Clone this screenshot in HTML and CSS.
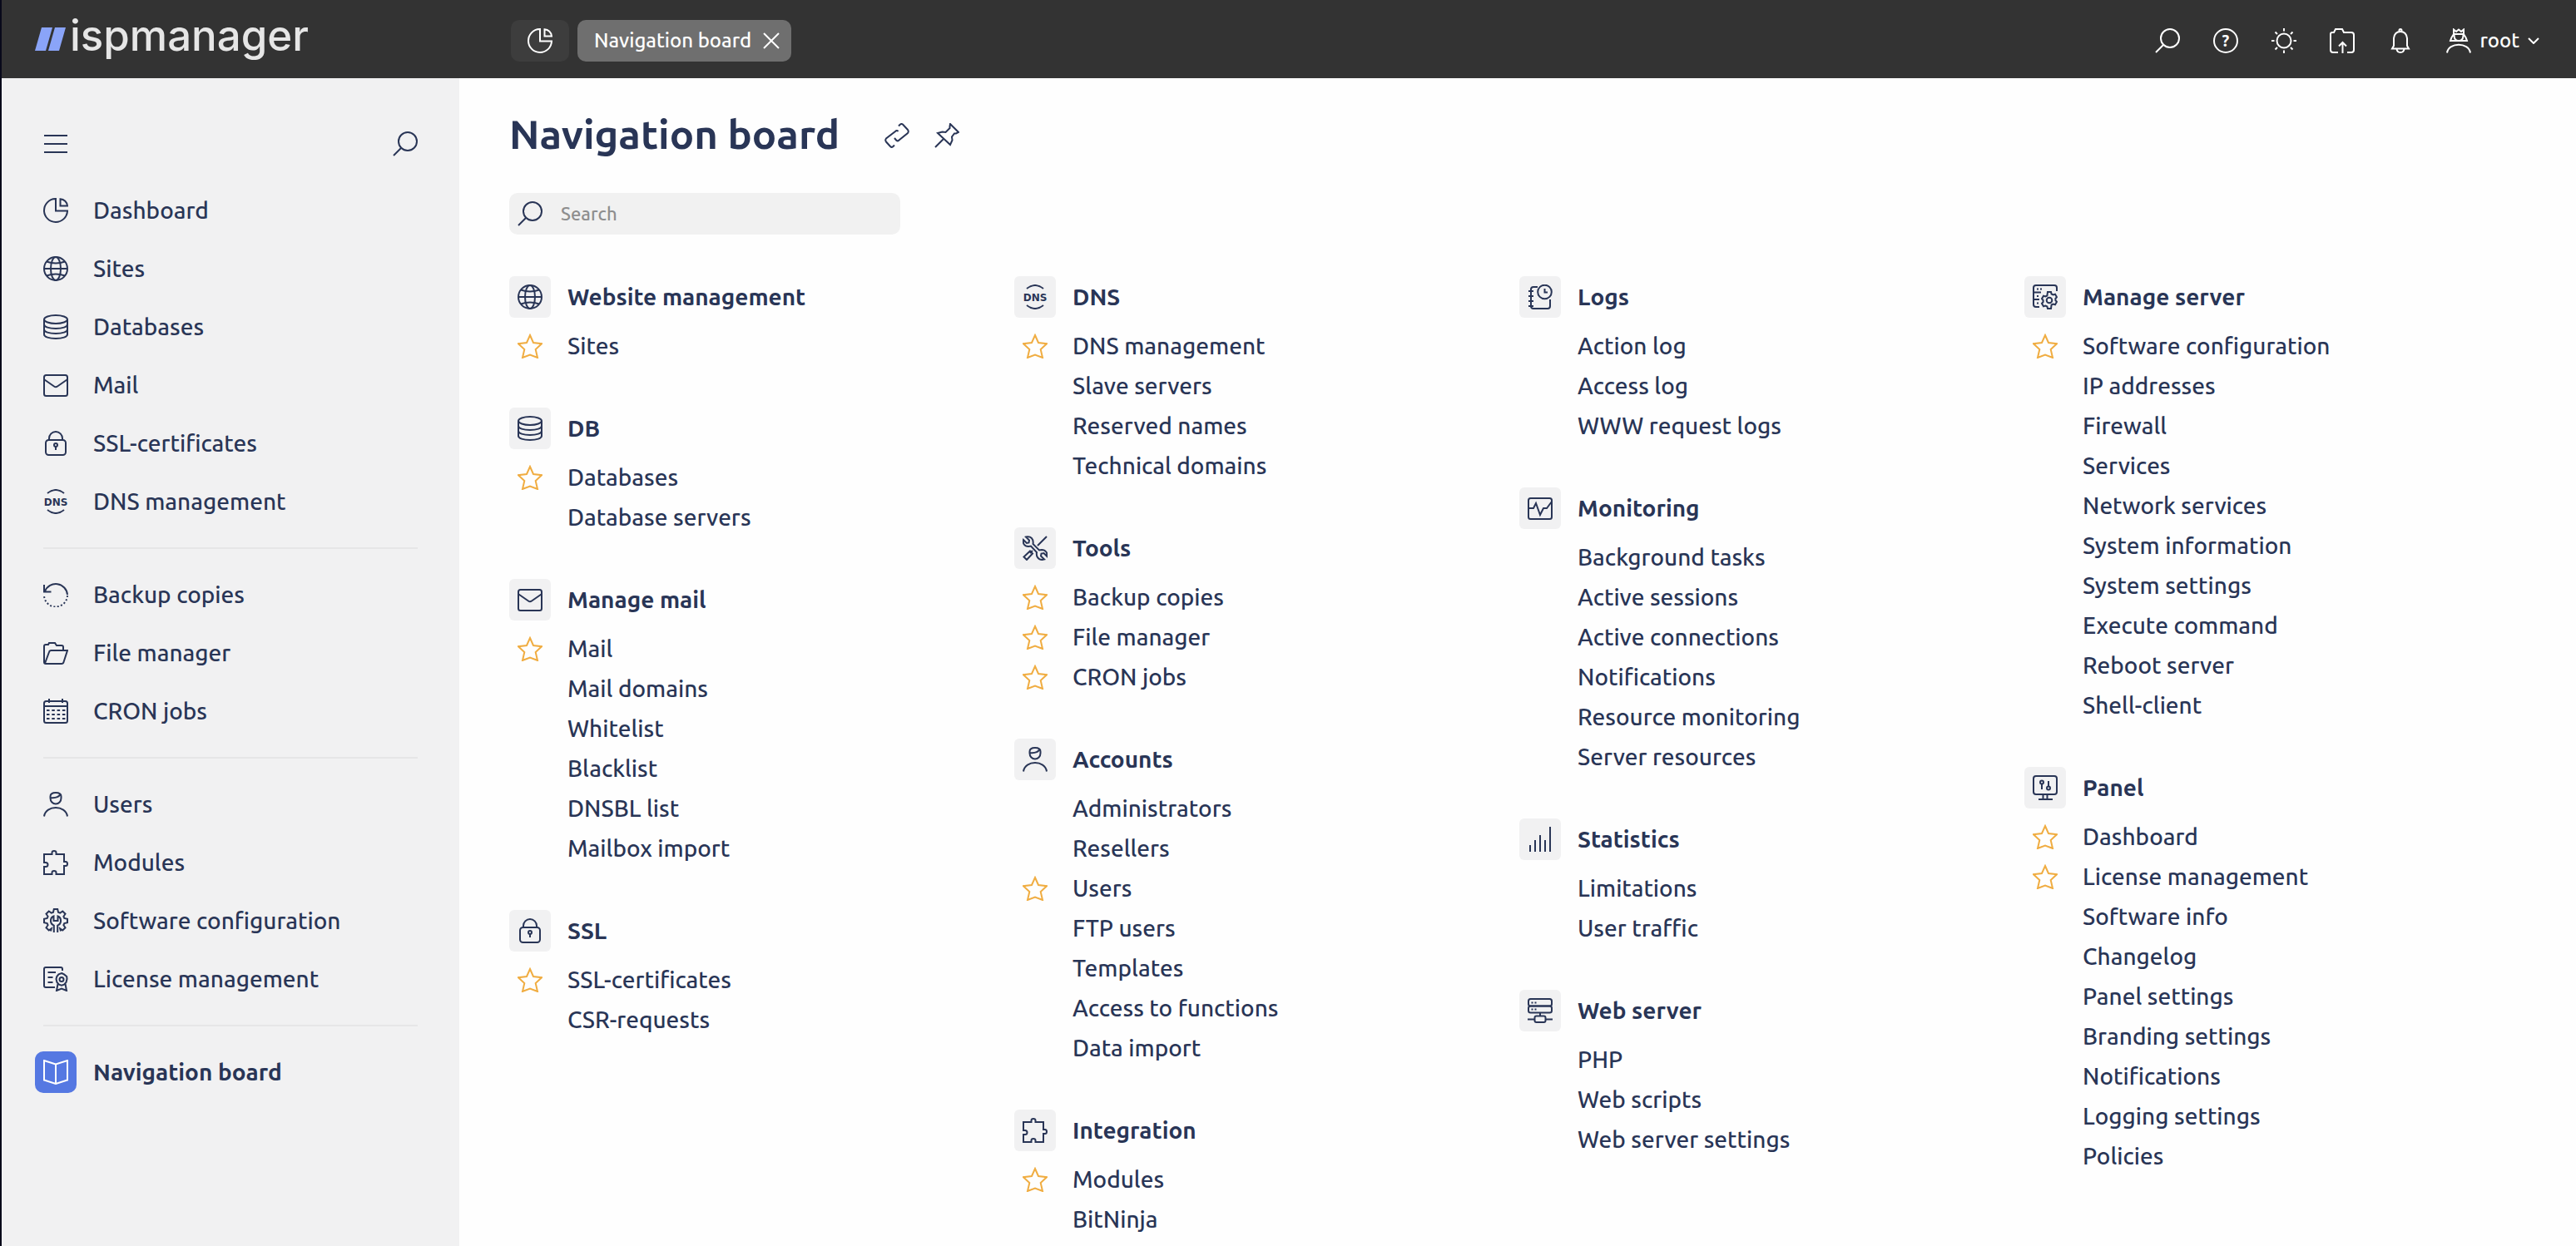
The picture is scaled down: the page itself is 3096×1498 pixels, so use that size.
FILE: index.html
```html
<!DOCTYPE html>
<html lang="en">
<head>
  <meta charset="UTF-8" />
  <meta name="viewport" content="width=device-width, initial-scale=1.0" />
  <title>Navigation board – ispmanager</title>
  <link rel="stylesheet" href="styles.css">
</head>
<body>

  <!-- Icon set, 30x30 grid -->
  <svg class="sprite" aria-hidden="true">
    <symbol id="i-search" viewBox="0 0 30 30"><circle cx="18" cy="12" r="11"/><path d="M10 20l-9 9"/></symbol>
    <symbol id="i-menu" viewBox="0 0 30 30"><path d="M1 5h28M1 15h28M1 25h28"/></symbol>
    <symbol id="i-pie" viewBox="0 0 30 30"><path d="M14.500 1A14 14 0 1 0 29 15.500H15V1z"/><path d="M20.500 1.200A9 9 0 0 1 29 9.500H20.500z"/></symbol>
    <symbol id="i-globe" viewBox="0 0 30 30"><circle cx="15" cy="15" r="14"/><ellipse cx="15" cy="15" rx="6" ry="14"/><path d="M1 15h28M4 6.500q11 4 22 0M4 23.500q11-4 22 0"/></symbol>
    <symbol id="i-db" viewBox="0 0 30 30"><ellipse cx="15" cy="6" rx="14" ry="5"/><path d="M1 6v18c0 3 6 5 14 5s14-2 14-5V6M1 12c0 3 6 5 14 5s14-2 14-5M1 18c0 3 6 5 14 5s14-2 14-5"/></symbol>
    <symbol id="i-mail" viewBox="0 0 30 30"><rect x="1" y="3" width="28" height="25" rx="2.500"/><path d="M1.500 8.500l11.500 8q2 1.400 4 0l11.500-8"/></symbol>
    <symbol id="i-lock" viewBox="0 0 30 30"><rect x="3" y="11" width="24" height="18" rx="3.500"/><path d="M7 11V9a8 8 0 0 1 16 0v2M15 19v4"/><circle cx="15" cy="17" r="2"/></symbol>
    <symbol id="i-dns" viewBox="0 0 30 30"><path d="M5 5q10-8 20 0M5 25q10 8 20 0"/><text class="dns-text" x="15" y="19.500">DNS</text></symbol>
    <symbol id="i-backup" viewBox="0 0 30 30"><path d="M1 3v8.500h8.500M2 11A14 14 0 0 1 29 15"/><path stroke-dasharray="2 2.400" d="M29 16a14 14 0 0 1-28-1"/></symbol>
    <symbol id="i-folder" viewBox="0 0 30 30"><path d="M1 26V7q0-2 2-2h3l1-2h7l2 3h6q2 0 2 2v4M2 27.500L7 14q.500-2 2.500-2H29l-4.500 14q-.500 2-2.500 2H3q-2 0-2-2"/></symbol>
    <symbol id="i-calendar" viewBox="0 0 30 30"><rect x="1" y="3" width="28" height="26" rx="2.500"/><path d="M1 9h28M7 0v5M23 0v5"/><path stroke-dasharray="3.500 2.800" d="M4 14h23M4 19h23M4 24h23"/></symbol>
    <symbol id="i-user" viewBox="0 0 30 30"><path d="M8.500 5.500q0-4.500 6.500-4.500t6.500 4.500v2a6.500 7 0 0 1-13 0zM8.500 7q9 1 12-4M1 29.500c2-14 26-14 28 0"/></symbol>
    <symbol id="i-puzzle" viewBox="0 0 30 30"><path d="M1 5h9.500V3q0-2 2.500-2t2.500 2v2H25v9h2q2 0 2 2.500t-2 2.500h-2v10h-9.500v-2q0-2-2.500-2t-2.500 2v2H1v-9h2q2.500 0 2.500-2.500T3 15H1z"/></symbol>
    <symbol id="i-software" viewBox="-15 -15 30 30"><path d="M6 12.500L5.200 9.400l3.100 2.100 3.200-3.200-2.100-3.100.9-2.200 3.700-.8v-4.400l-3.700-.8-.9-2.200 2.100-3.100-3.200-3.200-3.100 2.100-2.200-.9-.8-3.700h-4.400l-.8 3.700-2.200.9-3.100-2.100-3.200 3.200 2.100 3.100-.9 2.200-3.700.8v4.400l3.700.8.9 2.200-2.100 3.100 3.200 3.200 3.100-2.100-.8 3.100"/><path d="M-2.200 14V5.600A6 6 0 0 1-2.500-5.500V0h5v-5.500A6 6 0 0 1 2.200 5.600V14"/></symbol>
    <symbol id="i-license" viewBox="0 0 30 30"><path d="M23 5V3q0-2-2-2H3Q1 1 1 3v20q0 2 2 2h11M5.500 7H15M5.500 13h6M5.500 19h6"/><path d="M22 8l3 1.400 3.200 2.600.300 3-1 4-2.500 2.600-3 1-3-1-2.500-2.600-1-4 .800-3L18.500 9.400z"/><circle cx="22" cy="15.500" r="2.500"/><path d="M17.500 21L16 29l6-2.500 6 2.500-1.500-8"/></symbol>
    <symbol id="i-book" viewBox="0 0 30 30"><path d="M15 5.500L1 1v23.500L15 29l14-4.500V1zM15 5.500V29"/></symbol>
    <symbol id="i-tools" viewBox="0 0 30 30"><path d="M4 1.500l4 4-.500 3-2.500.500-4-4C0 9 2 13 7 13l3-.500L17 20c-1 5 2 9 6.500 9l2.500-.500-4-4 .500-3 3-.500 4 4C30 21 28 17 23 17l-3 .500L12.500 10C13.500 4 10 0 4 1.500z"/><path d="M29 1L18 12M12 18l-3 3M9 18.500l3 3L5 29l-3.500-3.500z"/></symbol>
    <symbol id="i-logs" viewBox="0 0 30 30"><path d="M12 3H7Q4 3 4 6v20q0 3 3 3h17q3 0 3-3v-8M1 8h6M1 14h6M1 20h6M1 26h6"/><circle cx="20.500" cy="9" r="8.300"/><path d="M20.500 5v4.500H24"/></symbol>
    <symbol id="i-monitoring" viewBox="0 0 30 30"><rect x="1" y="3" width="28" height="25" rx="2.500"/><path d="M1 15h6l3-6 5 14 4-8h4l6-8"/></symbol>
    <symbol id="i-stats" viewBox="0 0 30 30"><path d="M3 22v8M9 16v14M15 10v20M21 16v14M27 0v30"/></symbol>
    <symbol id="i-webserver" viewBox="0 0 30 30"><rect x="1" y="1" width="28" height="8.500" rx="2.500"/><rect x="1" y="9.500" width="28" height="8" rx="2.500"/><path d="M4.500 5.500h2M8.500 5.500h2M4.500 13.500h2M8.500 13.500h2M15 18v4M0 25.500h8M22 25.500h8"/><rect x="8.500" y="21.500" width="13" height="7.500" rx="2"/></symbol>
    <symbol id="i-server" viewBox="0 0 30 30"><path d="M29 8V4q0-3-3-3H4Q1 1 1 4v20q0 3 3 3h4M1 9.500h9M1 18h7M5 5.500h2M9 5.500h2M5 14h2M5 22.500h2"/><path d="M18 9h4l.6 2.500 2 1 2.400-.7 2 3.400-1.600 1.800v2l1.600 1.800-2 3.400-2.400-.7-2 1L22 29h-4l-.6-2.500-2-1-2.400.7-2-3.400 1.600-1.800v-2L11 17.200l2-3.400 2.400.7 2-1z"/><circle cx="20" cy="19" r="3.300"/></symbol>
    <symbol id="i-panel" viewBox="0 0 30 30"><rect x="1" y="1" width="28" height="22" rx="3"/><path d="M12.500 23v5M17.500 23v5M7 29h17M11 10v7M19 7v7"/><circle cx="11" cy="8.500" r="2"/><circle cx="19" cy="15.500" r="2"/></symbol>
    <symbol id="i-star" viewBox="0 0 30 30"><path d="M15 2L19 11l10 1.200-7.300 6.800L24 29l-9-3.500L6 29l2.300-10L1 12.200 11 11z"/></symbol>
    <symbol id="i-link" viewBox="0 0 30 30"><path d="M16.500 10q-1.500-2-3.500 0L2 18.500q-1.500 2 0 4L7 28q1.500 1.500 3 .5l2-2M17 3.500l2-2q1.500-1 3 0l6 6.500q1.500 2 0 4L17.500 20.500q-1.500 1.500-3 .5L12 18"/></symbol>
    <symbol id="i-pin" viewBox="0 0 30 30"><path d="M19 1l10 10-3 1.500h-2l-3 4 .5 4-2.500 5.500L4 12l5.500-1.500 4 .5 5-5V4zM10.500 19.500L1 29"/></symbol>
    <symbol id="i-help" viewBox="0 0 30 30"><circle cx="15" cy="15" r="14"/><text class="help-text" x="15" y="22">?</text></symbol>
    <symbol id="i-sun" viewBox="0 0 30 30"><circle cx="15" cy="15" r="8.500"/><path d="M15 0v3.500M15 26.500V30M0 15h3.500M26.500 15H30M4.500 4.500l2.500 2.500M23 23l2.500 2.500M4.500 25.500L7 23M23 7l2.500-2.500"/></symbol>
    <symbol id="i-upload" viewBox="0 0 30 30"><path d="M10 29H4q-3 0-3-3V7q0-2 2-2h2l2-4h8l2 4h9q3 0 3 3v18q0 3-3 3h-5M15.500 30V17.500M11 21.500l4.500-4.500 4.500 4.500"/></symbol>
    <symbol id="i-bell" viewBox="0 0 30 30"><path d="M7 21V12q1-8 8-8t8 8v9l2 3.500H5zM10.500 25q.5 4 4.500 4t4.500-4"/><circle cx="15" cy="2.500" r="1.500"/></symbol>
    <symbol id="i-root" viewBox="0 0 30 30"><path d="M9 7V1.500l3 2.500 3-2.500 3 2.500 3-2.500V7zM9 7q-3 4-4 8h20q-1-4-4-8M9.500 8q0 7 5.500 7t5.500-7M1 29.500c2-13 26-13 28 0"/></symbol>
    <symbol id="i-close" viewBox="0 0 20 20"><path d="M1 1l18 18M19 1L1 19"/></symbol>
    <symbol id="i-chevron" viewBox="0 0 14 8"><path d="M1 1l6 6 6-6"/></symbol>
  </svg>

  <header class="topbar">
    <a class="logo" href="#">
      <svg class="logo-mark" viewBox="0 0 37 28"><path d="M8 0h13l-8 28H0zM24 0h13l-8 28H16z"/></svg>
      <span>ispmanager</span>
    </a>
    <div class="tabs">
      <button class="tab-home" type="button" aria-label="Dashboard"><svg class="icon"><use href="#i-pie"/></svg></button>
      <div class="tab">
        <a href="#">Navigation board</a>
        <button type="button" aria-label="Close tab"><svg class="icon-close"><use href="#i-close"/></svg></button>
      </div>
    </div>
    <div class="tools">
      <button type="button" aria-label="Search"><svg class="icon"><use href="#i-search"/></svg></button>
      <button type="button" aria-label="Help"><svg class="icon"><use href="#i-help"/></svg></button>
      <button type="button" aria-label="Theme"><svg class="icon"><use href="#i-sun"/></svg></button>
      <button type="button" aria-label="Upload"><svg class="icon"><use href="#i-upload"/></svg></button>
      <button type="button" aria-label="Notifications"><svg class="icon"><use href="#i-bell"/></svg></button>
      <button class="account" type="button"><svg class="icon"><use href="#i-root"/></svg><span>root</span><svg class="icon-chevron"><use href="#i-chevron"/></svg></button>
    </div>
  </header>

  <div class="layout">
    <aside class="sidebar">
      <div class="sidebar-top">
        <button type="button" aria-label="Menu"><svg class="icon"><use href="#i-menu"/></svg></button>
        <button type="button" aria-label="Search menu"><svg class="icon"><use href="#i-search"/></svg></button>
      </div>
      <nav>
        <ul>
          <li><a href="#"><svg class="icon"><use href="#i-pie"/></svg>Dashboard</a></li>
          <li><a href="#"><svg class="icon"><use href="#i-globe"/></svg>Sites</a></li>
          <li><a href="#"><svg class="icon"><use href="#i-db"/></svg>Databases</a></li>
          <li><a href="#"><svg class="icon"><use href="#i-mail"/></svg>Mail</a></li>
          <li><a href="#"><svg class="icon"><use href="#i-lock"/></svg>SSL-certificates</a></li>
          <li><a href="#"><svg class="icon"><use href="#i-dns"/></svg>DNS management</a></li>
        </ul>
        <ul>
          <li><a href="#"><svg class="icon"><use href="#i-backup"/></svg>Backup copies</a></li>
          <li><a href="#"><svg class="icon"><use href="#i-folder"/></svg>File manager</a></li>
          <li><a href="#"><svg class="icon"><use href="#i-calendar"/></svg>CRON jobs</a></li>
        </ul>
        <ul>
          <li><a href="#"><svg class="icon"><use href="#i-user"/></svg>Users</a></li>
          <li><a href="#"><svg class="icon"><use href="#i-puzzle"/></svg>Modules</a></li>
          <li><a href="#"><svg class="icon"><use href="#i-software"/></svg>Software configuration</a></li>
          <li><a href="#"><svg class="icon"><use href="#i-license"/></svg>License management</a></li>
        </ul>
        <ul>
          <li><a class="active" href="#"><span class="active-box"><svg class="icon"><use href="#i-book"/></svg></span>Navigation board</a></li>
        </ul>
      </nav>
    </aside>

    <main class="content">
      <div class="title">
        <h1>Navigation board</h1>
        <button type="button" aria-label="Copy link"><svg class="icon"><use href="#i-link"/></svg></button>
        <button type="button" aria-label="Pin"><svg class="icon"><use href="#i-pin"/></svg></button>
      </div>

      <label class="search">
        <svg class="icon"><use href="#i-search"/></svg>
        <input type="text" placeholder="Search" aria-label="Search" />
      </label>

      <div class="board">
        <div class="column">
          <section>
            <h2><span class="box"><svg class="icon"><use href="#i-globe"/></svg></span>Website management</h2>
            <ul>
              <li><svg class="icon star"><use href="#i-star"/></svg><a href="#">Sites</a></li>
            </ul>
          </section>
          <section>
            <h2><span class="box"><svg class="icon"><use href="#i-db"/></svg></span>DB</h2>
            <ul>
              <li><svg class="icon star"><use href="#i-star"/></svg><a href="#">Databases</a></li>
              <li><a href="#">Database servers</a></li>
            </ul>
          </section>
          <section>
            <h2><span class="box"><svg class="icon"><use href="#i-mail"/></svg></span>Manage mail</h2>
            <ul>
              <li><svg class="icon star"><use href="#i-star"/></svg><a href="#">Mail</a></li>
              <li><a href="#">Mail domains</a></li>
              <li><a href="#">Whitelist</a></li>
              <li><a href="#">Blacklist</a></li>
              <li><a href="#">DNSBL list</a></li>
              <li><a href="#">Mailbox import</a></li>
            </ul>
          </section>
          <section>
            <h2><span class="box"><svg class="icon"><use href="#i-lock"/></svg></span>SSL</h2>
            <ul>
              <li><svg class="icon star"><use href="#i-star"/></svg><a href="#">SSL-certificates</a></li>
              <li><a href="#">CSR-requests</a></li>
            </ul>
          </section>
        </div>

        <div class="column">
          <section>
            <h2><span class="box"><svg class="icon"><use href="#i-dns"/></svg></span>DNS</h2>
            <ul>
              <li><svg class="icon star"><use href="#i-star"/></svg><a href="#">DNS management</a></li>
              <li><a href="#">Slave servers</a></li>
              <li><a href="#">Reserved names</a></li>
              <li><a href="#">Technical domains</a></li>
            </ul>
          </section>
          <section>
            <h2><span class="box"><svg class="icon"><use href="#i-tools"/></svg></span>Tools</h2>
            <ul>
              <li><svg class="icon star"><use href="#i-star"/></svg><a href="#">Backup copies</a></li>
              <li><svg class="icon star"><use href="#i-star"/></svg><a href="#">File manager</a></li>
              <li><svg class="icon star"><use href="#i-star"/></svg><a href="#">CRON jobs</a></li>
            </ul>
          </section>
          <section>
            <h2><span class="box"><svg class="icon"><use href="#i-user"/></svg></span>Accounts</h2>
            <ul>
              <li><a href="#">Administrators</a></li>
              <li><a href="#">Resellers</a></li>
              <li><svg class="icon star"><use href="#i-star"/></svg><a href="#">Users</a></li>
              <li><a href="#">FTP users</a></li>
              <li><a href="#">Templates</a></li>
              <li><a href="#">Access to functions</a></li>
              <li><a href="#">Data import</a></li>
            </ul>
          </section>
          <section>
            <h2><span class="box"><svg class="icon"><use href="#i-puzzle"/></svg></span>Integration</h2>
            <ul>
              <li><svg class="icon star"><use href="#i-star"/></svg><a href="#">Modules</a></li>
              <li><a href="#">BitNinja</a></li>
            </ul>
          </section>
        </div>

        <div class="column">
          <section>
            <h2><span class="box"><svg class="icon"><use href="#i-logs"/></svg></span>Logs</h2>
            <ul>
              <li><a href="#">Action log</a></li>
              <li><a href="#">Access log</a></li>
              <li><a href="#">WWW request logs</a></li>
            </ul>
          </section>
          <section>
            <h2><span class="box"><svg class="icon"><use href="#i-monitoring"/></svg></span>Monitoring</h2>
            <ul>
              <li><a href="#">Background tasks</a></li>
              <li><a href="#">Active sessions</a></li>
              <li><a href="#">Active connections</a></li>
              <li><a href="#">Notifications</a></li>
              <li><a href="#">Resource monitoring</a></li>
              <li><a href="#">Server resources</a></li>
            </ul>
          </section>
          <section>
            <h2><span class="box"><svg class="icon"><use href="#i-stats"/></svg></span>Statistics</h2>
            <ul>
              <li><a href="#">Limitations</a></li>
              <li><a href="#">User traffic</a></li>
            </ul>
          </section>
          <section>
            <h2><span class="box"><svg class="icon"><use href="#i-webserver"/></svg></span>Web server</h2>
            <ul>
              <li><a href="#">PHP</a></li>
              <li><a href="#">Web scripts</a></li>
              <li><a href="#">Web server settings</a></li>
            </ul>
          </section>
        </div>

        <div class="column">
          <section>
            <h2><span class="box"><svg class="icon"><use href="#i-server"/></svg></span>Manage server</h2>
            <ul>
              <li><svg class="icon star"><use href="#i-star"/></svg><a href="#">Software configuration</a></li>
              <li><a href="#">IP addresses</a></li>
              <li><a href="#">Firewall</a></li>
              <li><a href="#">Services</a></li>
              <li><a href="#">Network services</a></li>
              <li><a href="#">System information</a></li>
              <li><a href="#">System settings</a></li>
              <li><a href="#">Execute command</a></li>
              <li><a href="#">Reboot server</a></li>
              <li><a href="#">Shell-client</a></li>
            </ul>
          </section>
          <section>
            <h2><span class="box"><svg class="icon"><use href="#i-panel"/></svg></span>Panel</h2>
            <ul>
              <li><svg class="icon star"><use href="#i-star"/></svg><a href="#">Dashboard</a></li>
              <li><svg class="icon star"><use href="#i-star"/></svg><a href="#">License management</a></li>
              <li><a href="#">Software info</a></li>
              <li><a href="#">Changelog</a></li>
              <li><a href="#">Panel settings</a></li>
              <li><a href="#">Branding settings</a></li>
              <li><a href="#">Notifications</a></li>
              <li><a href="#">Logging settings</a></li>
              <li><a href="#">Policies</a></li>
            </ul>
          </section>
        </div>
      </div>
    </main>
  </div>

</body>
</html>
```
FILE: styles.css
```css
* {
  box-sizing: border-box;
}
body {
  margin: 0;
  min-height: 100vh;
  display: flex;
  flex-direction: column;
  border-left: 2px solid #08091a;
  font-family: Ubuntu, "Noto Sans", sans-serif;
  font-size: 28px;
  line-height: 48px;
  font-weight: 500;
  color: #293556;
  background-color: #fefefe;
}
a {
  color: inherit;
  text-decoration: none;
}
ul {
  list-style: none;
  margin: 0;
  padding: 0;
}
button {
  display: flex;
  align-items: center;
  padding: 0;
  border: 0;
  background: none;
  color: inherit;
  font: inherit;
  cursor: pointer;
}
.sprite {
  display: none;
}
.icon {
  width: 30px;
  height: 30px;
  flex: none;
  fill: none;
  stroke: currentColor;
  stroke-width: 2;
}
.dns-text, .help-text {
  fill: currentColor;
  stroke: none;
  font-weight: bold;
  text-anchor: middle;
}
.dns-text {
  font-family: "DejaVu Sans", sans-serif;
  font-size: 12px;
}
.help-text {
  font-size: 20px;
}

/* top bar */
.topbar {
  display: flex;
  align-items: center;
  height: 94px;
  padding: 4px 44px 0 40px;
  color: white;
  background-color: #333;
}
.logo {
  display: flex;
  align-items: baseline;
  gap: 5px;
  width: 572px;
  padding-bottom: 12px;
  font-family: Inter, sans-serif;
  font-size: 51px;
  color: #e6e6e6;
}
.logo-mark {
  width: 37px;
  height: 28px;
  fill: #8aa4f8;
}
.tabs {
  display: flex;
  gap: 10px;
  font-size: 24px;
}
.tab-home, .tab {
  height: 50px;
  padding: 0 20px;
  border-radius: 10px;
  background-color: #3d3d3d;
}
.tab {
  display: flex;
  align-items: center;
  gap: 14px;
  padding-right: 14px;
  background-color: #6f6f6f;
}
.icon-close {
  width: 20px;
  height: 20px;
  fill: none;
  stroke: currentColor;
  stroke-width: 2;
}
.icon-chevron {
  width: 14px;
  height: 8px;
  fill: none;
  stroke: currentColor;
  stroke-width: 2;
}
.tools {
  display: flex;
  gap: 40px;
  margin-left: auto;
  font-size: 24px;
}
.account {
  gap: 10px;
}

/* sidebar */
.layout {
  display: flex;
  flex: 1;
}
.sidebar {
  width: 550px;
  flex: none;
  padding: 64px 50px 40px;
  background-color: #f1f1f2;
}
.sidebar-top {
  display: flex;
  justify-content: space-between;
  margin-bottom: 30px;
}
.sidebar ul + ul {
  margin-top: 20px;
  padding-top: 20px;
  border-top: 2px solid #e6e6e7;
}
.sidebar a {
  display: flex;
  align-items: center;
  gap: 30px;
  height: 70px;
}
.sidebar .active {
  gap: 20px;
  margin-left: -10px;
  font-weight: 700;
}
.active-box {
  display: flex;
  padding: 10px;
  border-radius: 10px;
  color: white;
  background-color: #5578e2;
}

/* content */
.content {
  flex: 1;
  padding: 38px 56px 0 60px;
}
.title {
  display: flex;
  align-items: center;
  gap: 30px;
  margin-bottom: 38px;
}
h1 {
  margin: 0 24px 0 0;
  padding-bottom: 4px;
  font-size: 49px;
  line-height: 58px;
  font-weight: 700;
}
.search {
  display: flex;
  align-items: center;
  gap: 22px;
  width: 470px;
  height: 50px;
  margin-bottom: 50px;
  padding: 0 10px;
  border-radius: 10px;
  background-color: #f1f1f1;
}
.search input {
  flex: 1;
  min-width: 0;
  padding: 0;
  border: 0;
  background: none;
  color: inherit;
  font: inherit;
  font-size: 22px;
}
.search input::placeholder {
  color: #8e8e8e;
}
.board {
  display: grid;
  grid-template-columns: repeat(4, 1fr);
}
.column {
  display: flex;
  flex-direction: column;
  gap: 50px;
}
h2 {
  display: flex;
  align-items: center;
  gap: 20px;
  margin: 0 0 10px;
  font-size: 28px;
  line-height: 50px;
  font-weight: 700;
}
.box {
  display: flex;
  padding: 10px;
  border-radius: 6px;
  background-color: #f1f1f2;
}
.board li {
  display: grid;
  grid-template-columns: 50px 1fr;
  align-items: center;
  column-gap: 20px;
}
.board li a {
  grid-column: 2;
}
.star {
  justify-self: center;
  color: #f0ad42;
}
```
